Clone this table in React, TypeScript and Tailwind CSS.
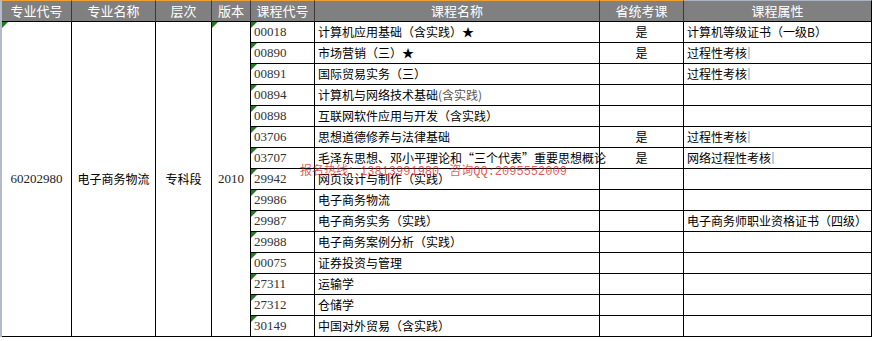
import React from "react";

const rows: { code: string; name: React.ReactNode; prov?: boolean; attr?: string; bar?: boolean }[] = [
  { code: "00018", name: "计算机应用基础（含实践）★", prov: true, attr: "计算机等级证书（一级B）" },
  { code: "00890", name: "市场营销（三）★", prov: true, attr: "过程性考核", bar: true },
  { code: "00891", name: "国际贸易实务（三）", attr: "过程性考核", bar: true },
  { code: "00894", name: <>计算机与网络技术基础<span className="text-[#555]">(含实践)</span></> },
  { code: "00898", name: "互联网软件应用与开发（含实践）" },
  { code: "03706", name: "思想道德修养与法律基础", prov: true, attr: "过程性考核", bar: true },
  { code: "03707", name: "毛泽东思想、邓小平理论和“三个代表”重要思想概论", prov: true, attr: "网络过程性考核", bar: true },
  { code: "29942", name: "网页设计与制作（实践）" },
  { code: "29986", name: "电子商务物流" },
  { code: "29987", name: "电子商务实务（实践）", attr: "电子商务师职业资格证书（四级）" },
  { code: "29988", name: "电子商务案例分析（实践）" },
  { code: "00075", name: "证券投资与管理" },
  { code: "27311", name: "运输学" },
  { code: "27312", name: "仓储学" },
  { code: "30149", name: "中国对外贸易（含实践）" },
];

const Tri = () => (
  <svg className="absolute left-0 top-0" width="6" height="6" viewBox="0 0 6 6">
    <polygon points="0,0 6,0 0,6" fill="#1f7a1f" />
  </svg>
);

const cjk = "font-['Noto_Sans_CJK_SC','Noto_Sans',sans-serif]";
const serif = "font-['Liberation_Serif','Noto_Sans_CJK_SC',serif]";
const mono = "font-['Liberation_Mono',monospace]";

export default function App() {
  const headers = ["专业代号", "专业名称", "层次", "版本", "课程代号", "课程名称", "省统考课", "课程属性"];
  return (
    <div className="relative w-[873px] h-[341px] bg-white overflow-hidden">
      <div
        className={`grid grid-cols-[70px_84px_56px_39px_64px_285px_84px_188px] grid-rows-[22px_repeat(15,21px)] border-l-2 border-l-[#b4bcc8] w-[872px] ${cjk}`}
      >
        {headers.map((h, i) => (
          <div
            key={h}
            className={`row-start-1 flex items-center justify-center bg-[#808080] text-white text-[13px] border-b border-b-black border-t ${
              i < 7 ? "border-t-[#f0a030]" : "border-t-[#aab4c4]"
            } ${i < 7 ? "border-r border-r-[#3a3a3a]" : "border-r border-r-black"}`}
            style={{ gridColumnStart: i + 1 }}
          >
            {h}
          </div>
        ))}
        <div className={`relative col-start-1 row-start-2 row-span-15 flex items-center justify-center border-r border-b border-black text-[13px] text-[#222] ${serif}`}>
          <Tri />
          60202980
        </div>
        <div className="col-start-2 row-start-2 row-span-15 flex items-center justify-center border-r border-b border-black text-[12px] text-black">
          电子商务物流
        </div>
        <div className="col-start-3 row-start-2 row-span-15 flex items-center justify-center border-r border-b border-black text-[12px] text-black">
          专科段
        </div>
        <div className={`relative col-start-4 row-start-2 row-span-15 flex items-center justify-center border-r border-b border-black text-[13px] text-[#222] ${serif}`}>
          <Tri />
          2010
        </div>
        {rows.map((r, idx) => (
          <React.Fragment key={r.code}>
            <div className={`relative col-start-5 flex items-center pl-[3px] border-r border-b border-black text-[13px] text-[#333] ${serif}`} style={{ gridRowStart: idx + 2 }}>
              <Tri />
              {r.code}
            </div>
            <div className="col-start-6 flex items-center pl-[3px] border-r border-b border-black text-[12px] text-black whitespace-nowrap" style={{ gridRowStart: idx + 2 }}>
              {r.name}
            </div>
            <div className="col-start-7 flex items-center justify-center border-r border-b border-black text-[12px] text-black" style={{ gridRowStart: idx + 2 }}>
              {r.prov ? "是" : ""}
            </div>
            <div className="col-start-8 flex items-center pl-[3px] border-r border-b border-black text-[12px] text-black whitespace-nowrap" style={{ gridRowStart: idx + 2 }}>
              {r.attr}
              {r.bar && <span className="ml-[1px] inline-block w-[2px] h-[12px] bg-[#c8ccd0]" />}
            </div>
          </React.Fragment>
        ))}
      </div>
      <div
        className={`absolute left-[300px] top-[162px] text-[12px] leading-[15px] text-[#e02020]/75 whitespace-nowrap ${cjk}`}
      >
        报名热线：<span className={mono}>13813991980</span>
        <span className="ml-[10px]">咨询</span>
        <span className={mono}>QQ:2095552009</span>
      </div>
    </div>
  );
}
